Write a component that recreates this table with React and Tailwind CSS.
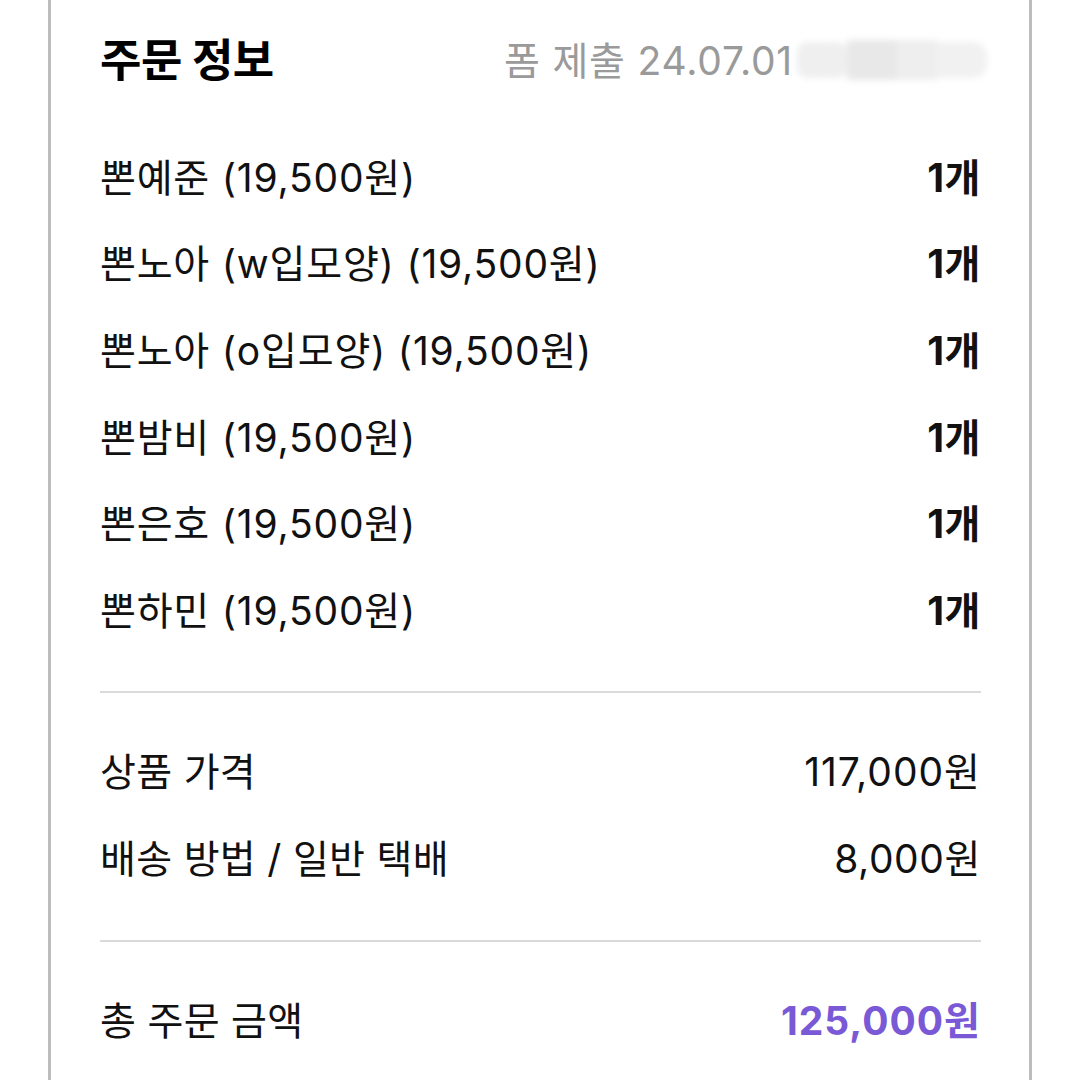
import React from "react";

const items = [
  "뽄예준 (19,500원)",
  "뽄노아 (w입모양) (19,500원)",
  "뽄노아 (o입모양) (19,500원)",
  "뽄밤비 (19,500원)",
  "뽄은호 (19,500원)",
  "뽄하민 (19,500원)",
];

const font = { fontFamily: '"Inter", "Noto Sans CJK KR", sans-serif' };

export default function App() {
  return (
    <div className="w-[1080px] h-[1080px] bg-white overflow-hidden" style={font}>
      <div className="ml-[48px] w-[984px] h-[1080px] border-x-[3px] border-[#bcbcbc] pl-[49px] pr-[48px] text-[#111]">
        <div className="pt-[20px] h-[100px] flex items-center justify-between">
          <div className="text-[45px] font-bold tracking-[-0.5px] leading-none text-black">주문 정보</div>
          <div className="flex items-center -mr-[12px]">
            <span className="text-[39px] text-[#9a9a9a] tracking-[0.8px] leading-none">폼 제출 24.07.01</span>
            <div className="ml-[4px] w-[196px] h-[44px] flex items-center blur-[3px]">
              <div className="w-[50px] h-[36px] bg-[#efefef] rounded-[10px]" />
              <div className="w-[50px] h-[40px] bg-[#e8e8e8]" />
              <div className="w-[40px] h-[40px] bg-[#eeeeee]" />
              <div className="w-[50px] h-[36px] bg-[#f1f1f1] rounded-r-[14px]" />
            </div>
          </div>
        </div>
        <div className="mt-[34px]">
          {items.map((t) => (
            <div key={t} className="h-[86.6px] flex items-center justify-between text-[39px] leading-none">
              <span className="tracking-[0.8px]">{t}</span>
              <span className="font-bold tracking-[0.5px]">1개</span>
            </div>
          ))}
        </div>
        <div className="mt-[37px] h-[2px] bg-[#dadada]" />
        <div className="mt-[35px]">
          <div className="h-[87px] flex items-center justify-between text-[39px] leading-none">
            <span className="tracking-[0.3px]">상품 가격</span>
            <span className="tracking-[1px]">117,000원</span>
          </div>
          <div className="h-[87px] flex items-center justify-between text-[39px] leading-none">
            <span className="tracking-[0.3px]">배송 방법 / 일반 택배</span>
            <span className="tracking-[0.6px]">8,000원</span>
          </div>
        </div>
        <div className="mt-[38px] h-[2px] bg-[#dadada]" />
        <div className="mt-[35px] h-[87px] flex items-center justify-between text-[39px] leading-none">
          <span className="tracking-[0.3px]">총 주문 금액</span>
          <span className="font-bold text-[#7a59d6] tracking-[1px]">125,000원</span>
        </div>
      </div>
    </div>
  );
}
